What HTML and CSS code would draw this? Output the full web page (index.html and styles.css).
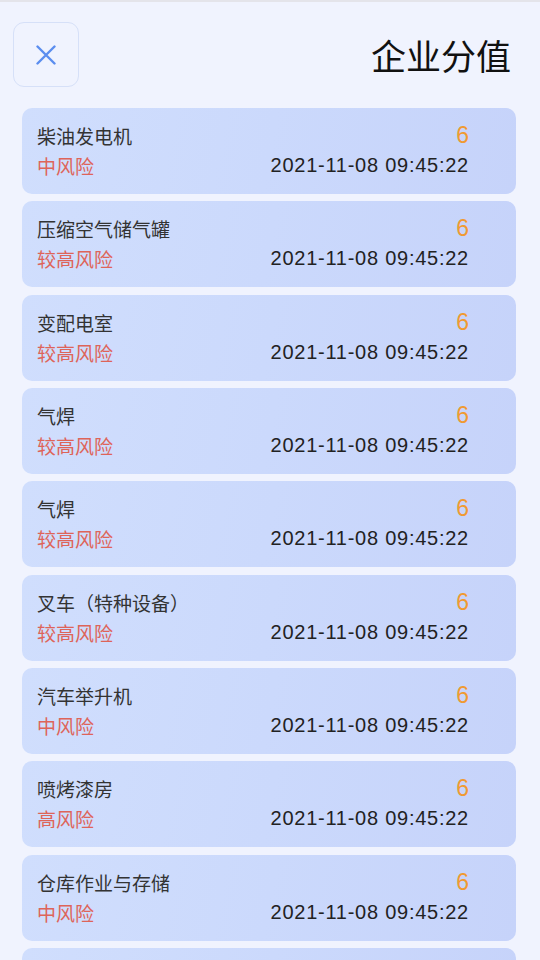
FILE: index.html
```html
<!DOCTYPE html>
<html lang="zh-CN">
<head>
<meta charset="utf-8">
<title>企业分值</title>
<link rel="stylesheet" href="styles.css">
</head>
<body>
<div class="topbar"></div>
<header class="header">
  <button class="close" type="button" aria-label="关闭">
    <svg width="20" height="20" viewBox="0 0 20 20"><path d="M1.5 1.5 L18.5 18.5 M18.5 1.5 L1.5 18.5" stroke="#5b8def" stroke-width="2.4" stroke-linecap="round" fill="none"/></svg>
  </button>
  <h1 class="title">企业分值</h1>
</header>
<main class="list">
  <div class="card"><div class="row"><span class="name">柴油发电机</span><span class="score">6</span></div><div class="row"><span class="risk">中风险</span><span class="date">2021-11-08 09:45:22</span></div></div>
  <div class="card"><div class="row"><span class="name">压缩空气储气罐</span><span class="score">6</span></div><div class="row"><span class="risk">较高风险</span><span class="date">2021-11-08 09:45:22</span></div></div>
  <div class="card"><div class="row"><span class="name">变配电室</span><span class="score">6</span></div><div class="row"><span class="risk">较高风险</span><span class="date">2021-11-08 09:45:22</span></div></div>
  <div class="card"><div class="row"><span class="name">气焊</span><span class="score">6</span></div><div class="row"><span class="risk">较高风险</span><span class="date">2021-11-08 09:45:22</span></div></div>
  <div class="card"><div class="row"><span class="name">气焊</span><span class="score">6</span></div><div class="row"><span class="risk">较高风险</span><span class="date">2021-11-08 09:45:22</span></div></div>
  <div class="card"><div class="row"><span class="name">叉车（特种设备）</span><span class="score">6</span></div><div class="row"><span class="risk">较高风险</span><span class="date">2021-11-08 09:45:22</span></div></div>
  <div class="card"><div class="row"><span class="name">汽车举升机</span><span class="score">6</span></div><div class="row"><span class="risk">中风险</span><span class="date">2021-11-08 09:45:22</span></div></div>
  <div class="card"><div class="row"><span class="name">喷烤漆房</span><span class="score">6</span></div><div class="row"><span class="risk">高风险</span><span class="date">2021-11-08 09:45:22</span></div></div>
  <div class="card"><div class="row"><span class="name">仓库作业与存储</span><span class="score">6</span></div><div class="row"><span class="risk">中风险</span><span class="date">2021-11-08 09:45:22</span></div></div>
  <div class="card"></div>
</main>
</body>
</html>
```
FILE: styles.css
```css
html, body {
  margin: 0;
  padding: 0;
}
body {
  width: 540px;
  height: 960px;
  overflow: hidden;
  background: #f0f3fe;
  font-family: "Noto Sans CJK SC", "Liberation Sans", sans-serif;
  color: #222;
}
.topbar {
  height: 2px;
  background: #e4e4ea;
}
.header {
  display: flex;
  align-items: center;
  justify-content: space-between;
  padding: 20px 29px 0 13px;
  height: 65px;
}
.close {
  width: 66px;
  height: 65px;
  box-sizing: border-box;
  border: 1.5px solid #d6e0f8;
  border-radius: 11px;
  background: #f0f3fe;
  display: flex;
  align-items: center;
  justify-content: center;
  padding: 0;
}
.title {
  margin: 0;
  font-size: 35px;
  font-weight: 400;
  color: #111;
  line-height: 1;
}
.list {
  display: flex;
  flex-direction: column;
  gap: 7.33px;
  padding: 21px 24px 0 22px;
}
.card {
  height: 86px;
  box-sizing: border-box;
  flex-shrink: 0;
  padding: 13px 47px 14px 15px;
  border-radius: 10px;
  background: linear-gradient(100deg, #d0defd 0%, #cbd9fc 50%, #c6d3fa 100%);
  display: flex;
  flex-direction: column;
}
.row {
  display: flex;
  justify-content: space-between;
  align-items: center;
  height: 29px;
}
.row + .row {
  margin-top: 1px;
}
.name {
  font-size: 19px;
  color: #333;
}
.risk {
  font-size: 19px;
  color: #de6459;
}
.score {
  font-family: "Liberation Sans", sans-serif;
  font-size: 23px;
  color: #f09a32;
}
.date {
  font-family: "Liberation Sans", sans-serif;
  font-size: 20px;
  color: #222;
  letter-spacing: 0.75px;
}
```
